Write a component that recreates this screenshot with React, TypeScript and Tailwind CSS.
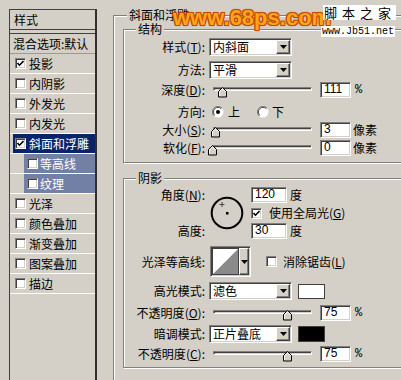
import type { ReactNode } from 'react'

// Windows-classic 3D edges
const sunken =
  'border border-t-[#808080] border-l-[#808080] border-b-white border-r-white shadow-[inset_1px_1px_0_#404040,inset_-1px_-1px_0_#d4d0c8]'
const raised =
  'border border-t-white border-l-white border-b-[#404040] border-r-[#404040] shadow-[inset_-1px_-1px_0_#808080] bg-[#d4d0c8]'
const etched = 'border border-[#808080] shadow-[inset_1px_1px_0_#fff,1px_1px_0_#fff]'

type StyleItem = { label: string; on?: boolean; active?: 'main' | 'sub' }

const styleItems: StyleItem[] = [
  { label: '投影', on: true },
  { label: '内阴影' },
  { label: '外发光' },
  { label: '内发光' },
  { label: '斜面和浮雕', on: true, active: 'main' },
  { label: '等高线', active: 'sub' },
  { label: '纹理', active: 'sub' },
  { label: '光泽' },
  { label: '颜色叠加' },
  { label: '渐变叠加' },
  { label: '图案叠加' },
  { label: '描边' },
]

function Mn({ k }: { k: string }) {
  return (
    <>
      (<u>{k}</u>)
    </>
  )
}

function Check({ on }: { on?: boolean }) {
  return (
    <span className={`flex w-[11px] h-[11px] shrink-0 items-center justify-center bg-white ${sunken}`}>
      {on && (
        <svg width="7" height="7" viewBox="0 0 7 7">
          <polyline points="0.5,3 2.5,5.2 6.5,1" fill="none" stroke="#000" strokeWidth="1.6" />
        </svg>
      )}
    </span>
  )
}

function Radio({ on }: { on?: boolean }) {
  return (
    <svg width="12" height="12" viewBox="0 0 12 12" className="shrink-0">
      <circle cx="6" cy="6" r="5.5" fill="#fff" />
      <path d="M10 2 A5.5 5.5 0 0 0 2 10" fill="none" stroke="#808080" strokeWidth="1" />
      <path d="M9.3 2.7 A4.6 4.6 0 0 0 2.7 9.3" fill="none" stroke="#404040" strokeWidth="1" />
      {on && <circle cx="6" cy="6" r="2" fill="#000" />}
    </svg>
  )
}

function Arrow() {
  return (
    <svg width="7" height="4" viewBox="0 0 7 4">
      <polygon points="0,0 7,0 3.5,4" fill="#000" />
    </svg>
  )
}

function Dropdown({ value }: { value: string }) {
  return (
    <div className={`flex h-[18px] w-[83px] bg-white ${sunken} p-[1px]`}>
      <span className="flex-1 pl-[2px] leading-[14px]">{value}</span>
      <span className={`flex w-[14px] items-center justify-center ${raised}`}>
        <Arrow />
      </span>
    </div>
  )
}

function NumBox({ value, w = 'w-[31px]' }: { value: string; w?: string }) {
  return (
    <div className={`h-[16px] ${w} bg-white ${sunken} pl-[3px] font-['Liberation_Sans',sans-serif] text-[12px] leading-[13px]`}>
      {value}
    </div>
  )
}

function Slider({ pos }: { pos: number }) {
  return (
    <div className="relative h-[18px] w-[106px] shrink-0">
      <div className={`absolute left-[4px] right-[3px] top-[6px] h-[4px] ${sunken}`} />
      <svg className="absolute top-[6px]" style={{ left: pos }} width="10" height="11" viewBox="0 0 10 11">
        <polygon points="0.5,4.5 4.5,0.5 8.5,4.5 8.5,10 0.5,10" fill="#d4d0c8" stroke="#000" strokeWidth="1" />
        <polyline points="1.5,9 1.5,4.9 4.5,1.9 7.5,4.9" fill="none" stroke="#fff" strokeWidth="1" />
      </svg>
    </div>
  )
}

function Label({ children }: { children: ReactNode }) {
  return <span className="w-[81px] shrink-0 text-right whitespace-nowrap">{children}</span>
}

function Row({ children, className = '' }: { children?: ReactNode; className?: string }) {
  return <div className={`flex h-[18px] items-center ${className}`}>{children}</div>
}

function Group({ title, className, children }: { title: string; className: string; children: ReactNode }) {
  return (
    <div className={`relative w-[320px] ${etched} ${className}`}>
      <span className="absolute -top-[7px] left-[12px] bg-[#d4d0c8] px-[2px] leading-[12px]">{title}</span>
      {children}
    </div>
  )
}

function StylesPanel() {
  return (
    <div className="ml-[9px] mt-[9px] h-[380px] w-[88px] border-l border-t border-r-2 border-l-[#404040] border-t-[#404040] border-r-[#303030]">
      <div className="flex h-[20px] items-center border-b border-[#404040] pl-[4px]">样式</div>
      <div className="h-[4px] border-b border-[#404040]" />
      <div className="flex h-[20px] items-center border-b border-[#9c9a94] pl-[3px] whitespace-nowrap">混合选项:默认</div>
      {styleItems.map((s) => {
        if (s.active === 'main') {
          return (
            <div key={s.label} className="flex h-[20px] border-b border-white pl-[3px]">
              <div className="flex flex-1 items-center gap-[3px] bg-[#0a246a] pl-[2px] text-white">
                <Check on={s.on} />
                <span>{s.label}</span>
              </div>
            </div>
          )
        }
        if (s.active === 'sub') {
          return (
            <div key={s.label} className="flex h-[20px] border-b border-white pl-[14px]">
              <div className="flex flex-1 items-center gap-[2px] bg-[#7380a6] pl-[3px] text-white">
                <Check on={s.on} />
                <span>{s.label}</span>
              </div>
            </div>
          )
        }
        return (
          <div key={s.label} className="flex h-[20px] items-center gap-[3px] border-b border-white pl-[5px]">
            <Check on={s.on} />
            <span>{s.label}</span>
          </div>
        )
      })}
    </div>
  )
}

function Structure() {
  return (
    <Group title="结构" className="h-[134px] pt-[8px]">
      <Row>
        <Label>
          样式<Mn k="T" />:
        </Label>
        <div className="ml-[4px]">
          <Dropdown value="内斜面" />
        </div>
      </Row>
      <Row className="mt-[5px]">
        <Label>方法:</Label>
        <div className="ml-[4px]">
          <Dropdown value="平滑" />
        </div>
      </Row>
      <Row className="mt-[2px]">
        <Label>
          深度<Mn k="D" />:
        </Label>
        <div className="ml-[4px]">
          <Slider pos={9} />
        </div>
        <div className="ml-[5px]">
          <NumBox value="111" />
        </div>
        <span className="ml-[4px] font-['Liberation_Mono',monospace]">%</span>
      </Row>
      <Row className="mt-[4px]">
        <Label>方向:</Label>
        <span className="ml-[7px]">
          <Radio on />
        </span>
        <span className="ml-[4px]">上</span>
        <span className="ml-[17px]">
          <Radio />
        </span>
        <span className="ml-[3px]">下</span>
      </Row>
      <Row>
        <Label>
          大小<Mn k="S" />:
        </Label>
        <div className="ml-[4px]">
          <Slider pos={2} />
        </div>
        <div className="ml-[5px]">
          <NumBox value="3" />
        </div>
        <span className="ml-[2px]">像素</span>
      </Row>
      <Row>
        <Label>
          软化<Mn k="F" />:
        </Label>
        <div className="ml-[4px]">
          <Slider pos={-1} />
        </div>
        <div className="ml-[5px]">
          <NumBox value="0" />
        </div>
        <span className="ml-[2px]">像素</span>
      </Row>
    </Group>
  )
}

function AngleDial() {
  return (
    <svg width="34" height="34" viewBox="0 0 34 34" className="ml-[5px] self-center">
      <circle cx="17" cy="17" r="15.3" fill="none" stroke="#000" strokeWidth="2" />
      <rect x="16" y="16" width="2.5" height="2.5" fill="#000" />
      <path d="M9.5 8.5 h5 M12 6 v5" stroke="#444" strokeWidth="1" />
    </svg>
  )
}

function ContourPicker() {
  return (
    <div className={`ml-[5px] flex h-[31px] w-[41px] p-[1px] ${sunken}`}>
      <svg width="27" height="27" viewBox="0 0 27 27" className="border border-[#404040]">
        <rect width="27" height="27" fill="#fff" />
        <polygon points="0,27 27,0 27,27" fill="#8a8a8a" />
      </svg>
      <span className={`flex flex-1 items-center justify-center ${raised}`}>
        <Arrow />
      </span>
    </div>
  )
}

function Shading() {
  return (
    <Group title="阴影" className="mt-[15px] h-[190px] pt-[7px]">
      <div className="flex">
        <div className="flex flex-col">
          <Row>
            <Label>
              角度<Mn k="N" />:
            </Label>
          </Row>
          <Row />
          <Row>
            <Label>高度:</Label>
          </Row>
        </div>
        <AngleDial />
        <div className="ml-[7px] flex flex-col">
          <Row>
            <NumBox value="120" w="w-[36px]" />
            <span className="ml-[3px]">度</span>
          </Row>
          <Row>
            <Check on />
            <span className="ml-[7px]">
              使用全局光<Mn k="G" />
            </span>
          </Row>
          <Row>
            <NumBox value="30" w="w-[36px]" />
            <span className="ml-[3px]">度</span>
          </Row>
        </div>
      </div>
      <div className="mt-[6px] flex h-[31px] items-center">
        <Label>光泽等高线:</Label>
        <ContourPicker />
        <span className="ml-[15px]">
          <Check />
        </span>
        <span className="ml-[6px]">
          消除锯齿<Mn k="L" />
        </span>
      </div>
      <Row className="mt-[5px]">
        <Label>高光模式:</Label>
        <div className="ml-[4px]">
          <Dropdown value="滤色" />
        </div>
        <div className="ml-[6px] h-[15px] w-[27px] border border-[#404040] bg-white" />
      </Row>
      <Row className="mt-[4px]">
        <Label>
          不透明度<Mn k="O" />:
        </Label>
        <div className="ml-[4px]">
          <Slider pos={74} />
        </div>
        <div className="ml-[5px]">
          <NumBox value="75" />
        </div>
        <span className="ml-[4px] font-['Liberation_Mono',monospace]">%</span>
      </Row>
      <Row className="mt-[3px]">
        <Label>暗调模式:</Label>
        <div className="ml-[4px]">
          <Dropdown value="正片叠底" />
        </div>
        <div className="ml-[6px] h-[16px] w-[27px] border border-[#404040] bg-black" />
      </Row>
      <Row className="mt-[2px]">
        <Label>
          不透明度<Mn k="C" />:
        </Label>
        <div className="ml-[4px]">
          <Slider pos={74} />
        </div>
        <div className="ml-[5px]">
          <NumBox value="75" />
        </div>
        <span className="ml-[4px] font-['Liberation_Mono',monospace]">%</span>
      </Row>
    </Group>
  )
}

export default function App() {
  return (
    <div className="relative flex h-[380px] w-[401px] overflow-hidden bg-[#d4d0c8] font-['Noto_Sans_CJK_SC',sans-serif] text-[12px] text-black">
      <div className="w-[113px] shrink-0">
        <StylesPanel />
      </div>

      <div className={`relative mt-[15px] h-[420px] w-[340px] shrink-0 pl-[9px] pt-[13px] ${etched}`}>
        <span className="absolute -top-[7px] left-[13px] bg-[#d4d0c8] px-[2px] leading-[12px]">斜面和浮雕</span>
        <Structure />
        <Shading />
      </div>

      {/* watermarks */}
      <span className="absolute left-[173px] top-[7px] font-['Liberation_Sans',sans-serif] text-[22px] font-bold leading-[22px] text-[#ffa41c] [text-shadow:1px_1px_0_#c24a00,-1px_-1px_0_#c24a00,1px_-1px_0_#c24a00,-1px_1px_0_#c24a00,0_0_3px_#e06a10]">
        www.68ps.com
      </span>
      <span className="absolute left-[323px] top-[5px] bg-white pl-[1px] text-[13px] leading-[15px] tracking-[5px]">
        脚本之家
      </span>
      <span className="absolute left-[321px] top-[26px] bg-white px-[1px] font-['Liberation_Mono',monospace] text-[10px] leading-[11px]">
        www.Jb51.net
      </span>
    </div>
  )
}
